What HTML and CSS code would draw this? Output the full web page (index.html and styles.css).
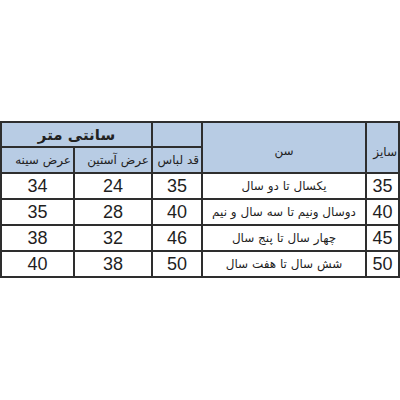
FILE: index.html
```
<!DOCTYPE html>
<html lang="fa">
<head>
<meta charset="utf-8">
<link rel="stylesheet" href="styles.css">
</head>
<body>
<div class="page">
<table class="sizes" dir="rtl">
  <colgroup>
    <col class="c-size">
    <col class="c-age">
    <col class="c-len">
    <col class="c-sleeve">
    <col class="c-chest">
  </colgroup>
  <thead>
    <tr class="h1">
      <th rowspan="2" class="size-h">سایز</th>
      <th rowspan="2" class="age-h">سن</th>
      <th class="empty"></th>
      <th colspan="2" class="cm">سانتی متر</th>
    </tr>
    <tr class="h2">
      <th class="sub">قد لباس</th>
      <th class="sub">عرض آستین</th>
      <th class="sub">عرض سینه</th>
    </tr>
  </thead>
  <tbody>
    <tr><td class="num">35</td><td class="age">یکسال تا دو سال</td><td class="num">35</td><td class="num">24</td><td class="num">34</td></tr>
    <tr><td class="num">40</td><td class="age">دوسال ونیم تا سه سال و نیم</td><td class="num">40</td><td class="num">28</td><td class="num">35</td></tr>
    <tr><td class="num">45</td><td class="age">چهار سال تا پنج سال</td><td class="num">46</td><td class="num">32</td><td class="num">38</td></tr>
    <tr><td class="num">50</td><td class="age">شش سال تا هفت سال</td><td class="num">50</td><td class="num">38</td><td class="num">40</td></tr>
  </tbody>
</table>
</div>
</body>
</html>
```
FILE: styles.css
```
html, body {
  margin: 0;
  padding: 0;
  background: #ffffff;
}
.page {
  padding-top: 121px;
  width: 400px;
}
.sizes {
  border-collapse: collapse;
  width: 398px;
  table-layout: fixed;
  font-family: "Liberation Sans", "DejaVu Sans", sans-serif;
  color: #1f1f1f;
}
.c-size { width: 33px; }
.c-age { width: 164px; }
.c-len { width: 50px; }
.c-sleeve { width: 78px; }
.c-chest { width: 73px; }
.sizes th, .sizes td {
  border: 2px solid #2e2e2e;
  padding: 0;
  text-align: center;
  vertical-align: middle;
  overflow: hidden;
  white-space: nowrap;
}
.sizes th {
  background: #b8cce4;
  font-weight: normal;
  font-family: "DejaVu Sans", sans-serif;
  font-size: 12px;
  color: #222;
}
.sizes thead tr.h1 { height: 25px; }
.sizes thead tr.h2 { height: 26px; }
.sizes tbody tr { height: 26px; }
.sizes th.cm {
  font-size: 15px;
  font-weight: bold;
}
.sizes th.size-h {
  text-align: right;
  padding-right: 1px;
  padding-top: 8px;
  font-size: 12px;
}
.sizes th.age-h {
  padding-top: 6px;
  font-size: 12px;
}
.sizes th.sub {
  font-size: 12px;
  text-align: right;
  padding-right: 2px;
}
.sizes td.num {
  font-size: 18px;
}
.sizes td.age {
  font-family: "DejaVu Sans", sans-serif;
  font-size: 12px;
}
```
